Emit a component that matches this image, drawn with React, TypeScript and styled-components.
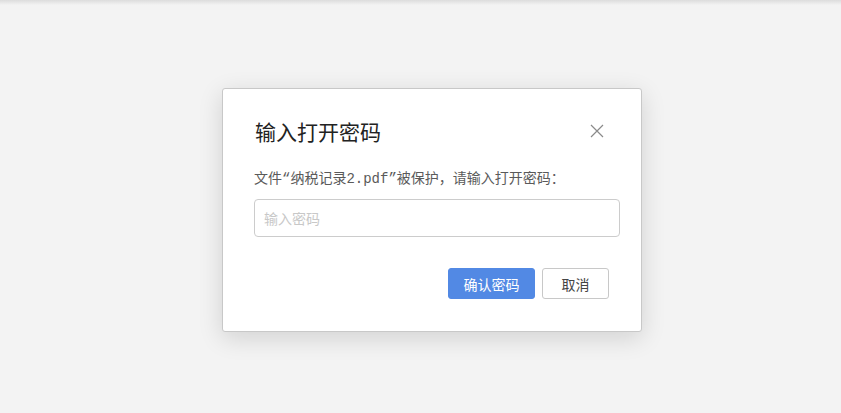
import React from 'react';
import styled, { createGlobalStyle } from 'styled-components';

const GlobalStyle = createGlobalStyle`
  html, body {
    margin: 0;
    padding: 0;
    background: #f3f3f3;
  }
  body {
    font-family: "Noto Sans CJK SC", "Noto Sans", sans-serif;
  }
`;

function CloseIcon(): JSX.Element {
  return (
    <svg width="14" height="14" viewBox="0 0 14 14">
      <path d="M1 1 L13 13 M13 1 L1 13" stroke="#8a8a8a" strokeWidth="1.2" fill="none" />
    </svg>
  );
}

function App(): JSX.Element {
  return (
    <Page>
      <GlobalStyle />
      <TopShade />
      <Stage>
        <Dialog>
          <Header>
            <Title>输入打开密码</Title>
            <CloseBtn type="button" aria-label="关闭">
              <CloseIcon />
            </CloseBtn>
          </Header>
          <Desc>文件“纳税记录2.pdf”被保护，请输入打开密码：</Desc>
          <PasswordInput type="password" placeholder="输入密码" />
          <Footer>
            <Btn type="button" primary>
              确认密码
            </Btn>
            <Btn type="button">取消</Btn>
          </Footer>
        </Dialog>
      </Stage>
    </Page>
  );
}

const Page = styled.div`
  width: 841px;
  height: 413px;
  background: #f3f3f3;
  overflow: hidden;
`;

const TopShade = styled.div`
  height: 5px;
  background: linear-gradient(to bottom, #dcdcdc, #f3f3f3);
`;

const Stage = styled.div`
  padding-top: 83px;
  padding-left: 222px;
`;

const Dialog = styled.div`
  width: 366px;
  padding: 28px 21px 32px 31px;
  background: #fff;
  border: 1px solid #c8c8c8;
  border-radius: 3px;
  box-shadow: 0 6px 24px rgba(0, 0, 0, 0.14);
  display: flex;
  flex-direction: column;
`;

const Header = styled.div`
  display: flex;
  align-items: center;
  justify-content: space-between;
  height: 28px;
`;

const Title = styled.div`
  font-size: 21px;
  line-height: 28px;
  color: #222;
  padding-left: 1px;
`;

const CloseBtn = styled.button`
  border: none;
  background: none;
  padding: 0;
  margin-right: 16px;
  display: flex;
  cursor: pointer;
`;

const Desc = styled.div`
  margin-top: 24px;
  font-size: 14px;
  line-height: 20px;
  color: #5a5a5a;
  font-family: "Liberation Mono", "Noto Sans CJK SC", monospace;
`;

const PasswordInput = styled.input`
  margin-top: 10px;
  width: 366px;
  height: 38px;
  box-sizing: border-box;
  border: 1px solid #cccccc;
  border-radius: 4px;
  padding: 0 9px;
  font-size: 14px;
  font-family: "Noto Sans CJK SC", sans-serif;
  outline: none;
  &::placeholder {
    color: #c8c8c8;
  }
`;

const Footer = styled.div`
  margin-top: 31px;
  margin-right: 11px;
  display: flex;
  justify-content: flex-end;
  gap: 7px;
`;

const Btn = styled.button<{ primary?: boolean }>`
  height: 31px;
  box-sizing: border-box;
  padding: 0;
  width: ${({ primary }) => (primary ? '87px' : '67px')};
  border-radius: 3px;
  border: 1px solid ${({ primary }) => (primary ? '#5289e4' : '#c8c8c8')};
  background: ${({ primary }) => (primary ? '#5289e4' : '#fff')};
  color: ${({ primary }) => (primary ? '#fff' : '#444')};
  font-size: 14px;
  font-family: "Noto Sans CJK SC", sans-serif;
  cursor: pointer;
`;

export default App;
